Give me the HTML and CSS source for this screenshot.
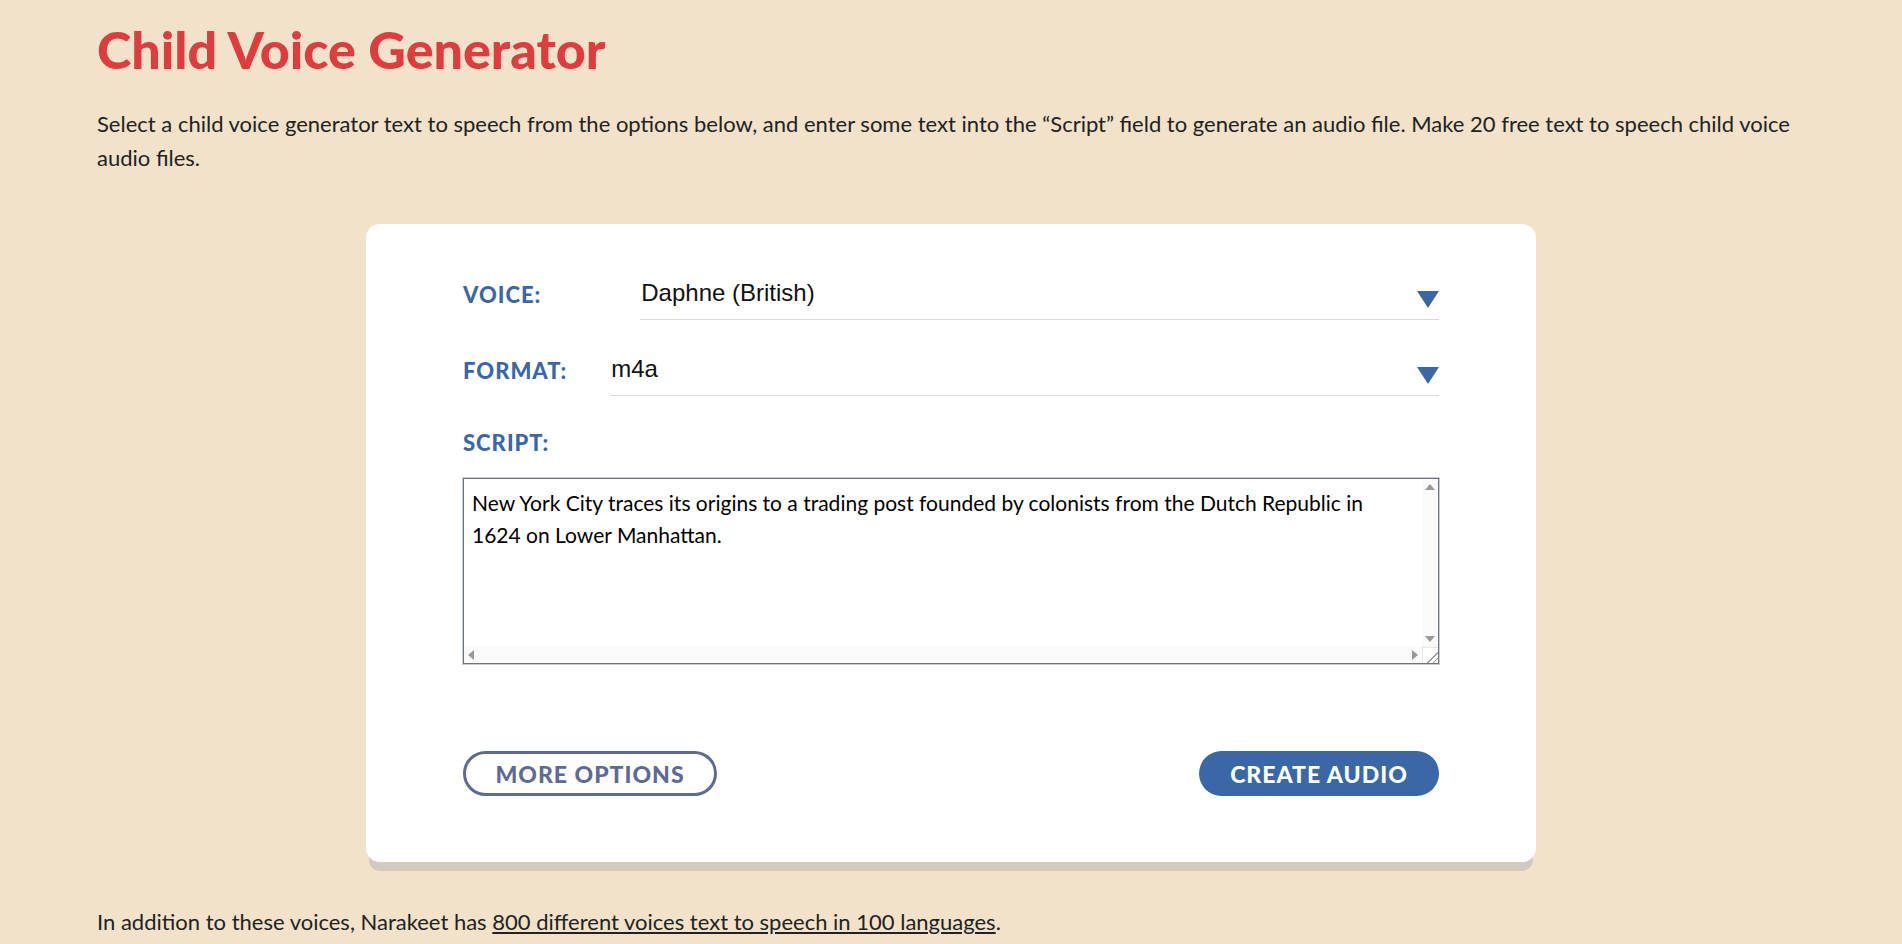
FILE: index.html
```html
<!DOCTYPE html>
<html lang="en">
<head>
    <meta charset="UTF-8">
    <meta name="viewport" content="width=device-width">
    <title>Child Voice Generator</title>
    <link rel="stylesheet" href="styles.css">
</head>
<body>

    <div class="intro">
        <h1 class="title">Child Voice Generator</h1>
        <p class="lead">Select a child voice generator text to speech from the options below, and enter some text into the &ldquo;Script&rdquo; field to generate an audio file. Make 20 free text to speech child voice audio files.</p>
    </div>

    <div class="card">
        <div class="row">
            <label class="label" for="voice">Voice:</label>
            <div class="pick pick-voice">
                <select id="voice" class="select">
                    <option>Daphne (British)</option>
                </select>
                <svg class="arrow" width="22" height="17" viewBox="0 0 22 17"><polygon points="0,0 22,0 11,17" fill="#3b67a5"/></svg>
            </div>
        </div>

        <div class="row">
            <label class="label" for="format">Format:</label>
            <div class="pick pick-format">
                <select id="format" class="select">
                    <option>m4a</option>
                </select>
                <svg class="arrow" width="22" height="17" viewBox="0 0 22 17"><polygon points="0,0 22,0 11,17" fill="#3b67a5"/></svg>
            </div>
        </div>

        <label class="label script-label" for="script">Script:</label>
        <div class="script-box">
            <textarea id="script" class="script">New York City traces its origins to a trading post founded by colonists from the Dutch Republic in 1624 on Lower Manhattan.</textarea>
            <!-- scrollbars drawn by hand, headless browser hides the real ones -->
            <div class="sb-v">
                <span class="tri tri-up"></span>
                <span class="tri tri-down"></span>
            </div>
            <div class="sb-h">
                <span class="tri tri-left"></span>
                <span class="tri tri-right"></span>
            </div>
            <div class="sb-corner"></div>
        </div>

        <div class="actions">
            <button class="btn btn-outline">More options</button>
            <button class="btn btn-primary">Create audio</button>
        </div>
    </div>

    <p class="more">In addition to these voices, Narakeet has <a href="#">800 different voices text to speech in 100 languages</a>.</p>

</body>
</html>
```

FILE: styles.css
```css
body {
  margin: 0;
  background-color: #f1e2c9;
  color: #222;
  font-family: "Lato", "Open Sans", sans-serif;
}

.intro {
  padding: 0 60px 0 97px;
}

.title {
  margin: 0;
  padding-top: 17px;
  font-family: "Lato", sans-serif;
  font-weight: 900;
  font-size: 52px;
  line-height: 64px;
  color: #df3d3d;
}

.lead {
  margin: 26px 0 0 0;
  font-size: 22px;
  line-height: 34px;
}

.card {
  width: 1170px;
  box-sizing: border-box;
  margin: 49px auto 0 auto;
  padding: 45px 97px 66px 97px;
  background: #fff;
  border-radius: 14px;
  box-shadow: 0 12px 0 -3px #d2cabe;
}

.row {
  display: flex;
  align-items: center;
  margin-bottom: 25px;
}

.label {
  display: block;
  font-family: "Lato", sans-serif;
  font-weight: 900;
  font-size: 22px;
  letter-spacing: 1px;
  color: #3b67a5;
  text-transform: uppercase;
}

.pick {
  position: relative;
  flex: 1;
}

.pick-voice {
  margin-left: 99px;
}

.pick-format {
  margin-left: 43px;
}

.select {
  -webkit-appearance: none;
  appearance: none;
  width: 100%;
  height: 51px;
  padding: 0 30px 4px 1px;
  border: none;
  border-bottom: 1px solid #d8d8d8;
  background: transparent;
  font-family: "Liberation Sans", Arial, sans-serif;
  font-size: 24px;
  color: #111;
  outline: none;
}

.arrow {
  position: absolute;
  right: 0;
  bottom: 12px;
  pointer-events: none;
}

.script-label {
  margin-top: 34px;
  line-height: 26px;
}

.script-box {
  position: relative;
  margin-top: 22px;
}

.script {
  display: block;
  width: 100%;
  height: 186px;
  box-sizing: border-box;
  padding: 8px 35px 8px 8px;
  border: 1px solid #6f747a;
  box-shadow: 0 0 0 1px #c9ccd0;
  font-family: "Lato", sans-serif;
  font-size: 21px;
  line-height: 32px;
  color: #000;
  overflow: hidden;
  resize: none;
}

.sb-v {
  position: absolute;
  top: 1px;
  right: 1px;
  bottom: 17px;
  width: 16px;
  background: #fafafa;
}

.sb-h {
  position: absolute;
  left: 1px;
  right: 17px;
  bottom: 1px;
  height: 16px;
  background: #fafafa;
}

.sb-corner {
  position: absolute;
  right: 1px;
  bottom: 1px;
  width: 15px;
  height: 15px;
  border-left: 1px solid #e6e6e6;
  border-top: 1px solid #e6e6e6;
  background: linear-gradient(135deg, transparent 0 62%, #9a9a9a 62% 67%, transparent 67% 80%, #9a9a9a 80% 85%, transparent 85%);
}

.tri {
  position: absolute;
  width: 0;
  height: 0;
}

.tri-up {
  top: 5px;
  left: 3px;
  border-left: 5px solid transparent;
  border-right: 5px solid transparent;
  border-bottom: 6px solid #989898;
}

.tri-down {
  bottom: 5px;
  left: 3px;
  border-left: 5px solid transparent;
  border-right: 5px solid transparent;
  border-top: 6px solid #989898;
}

.tri-left {
  left: 4px;
  top: 3px;
  border-top: 5px solid transparent;
  border-bottom: 5px solid transparent;
  border-right: 6px solid #989898;
}

.tri-right {
  right: 4px;
  top: 3px;
  border-top: 5px solid transparent;
  border-bottom: 5px solid transparent;
  border-left: 6px solid #989898;
}

.actions {
  display: flex;
  justify-content: space-between;
  margin-top: 87px;
}

.btn {
  height: 45px;
  border-radius: 23px;
  font-family: "Lato", sans-serif;
  font-weight: 900;
  font-size: 23px;
  letter-spacing: 1px;
  text-transform: uppercase;
  cursor: pointer;
}

.btn-outline {
  width: 254px;
  background: #fff;
  border: 3px solid #5f6a92;
  color: #5f6a92;
}

.btn-primary {
  width: 240px;
  background: #3a68a6;
  border: none;
  color: #fff;
}

.more {
  margin: 43px 0 0 97px;
  font-size: 22px;
  line-height: 34px;
}

.more a {
  color: #222;
  text-decoration: underline;
}
```
